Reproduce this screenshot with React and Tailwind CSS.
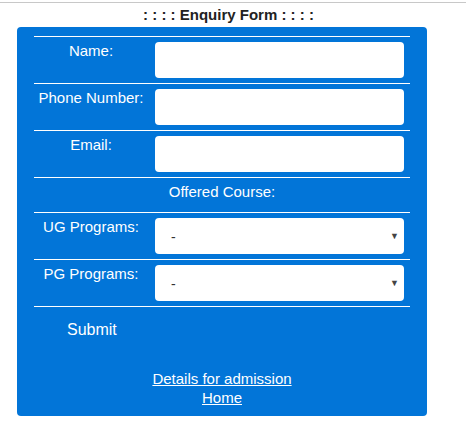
const rows = [
  { label: "Name:", type: "text" },
  { label: "Phone Number:", type: "tel" },
  { label: "Email:", type: "email" },
];

const programs = ["UG Programs:", "PG Programs:"];

function Row({ label, children }) {
  return (
    <div className="flex border-t border-white pt-[5px] pb-[5px]">
      <div className="w-[114px] shrink-0 text-center leading-[18px]">
        {label}
      </div>
      <div className="ml-[7px] w-[249px]">{children}</div>
    </div>
  );
}

export default function App() {
  return (
    <div
      className="h-[422px] w-[466px] bg-white text-[15px]"
      style={{ fontFamily: '"Liberation Sans", Arial, sans-serif' }}
    >
      <div className="h-[2px]" />
      <div className="h-px bg-[#c8c8c8]" />
      <div className="flex h-[24px] items-center justify-center pr-[9px] font-bold text-[#222]">
        : : : : Enquiry Form : : : :
      </div>

      <div className="ml-[17px] h-[389px] w-[410px] rounded-[4px] bg-[#0275d8] px-[17px] pt-[9px] text-white">
        <form onSubmit={(e) => e.preventDefault()}>
          {rows.map((row) => (
            <Row key={row.label} label={row.label}>
              <input
                type={row.type}
                className="block h-[36px] w-full rounded-[4px] bg-white px-3 text-[#333] outline-none"
              />
            </Row>
          ))}

          <div className="h-[35px] border-t border-white pt-[5px] text-center leading-[18px]">
            Offered Course:
          </div>

          {programs.map((label) => (
            <Row key={label} label={label}>
              <div className="relative">
                <select className="block h-[36px] w-full appearance-none rounded-[4px] bg-white pt-[3px] pl-[16px] text-[14px] text-[#333] outline-none">
                  <option>-</option>
                </select>
                <span className="pointer-events-none absolute right-[5px] top-[12px] text-[9px] text-[#444]">
                  ▼
                </span>
              </div>
            </Row>
          ))}

          <div className="flex h-[46px] items-center border-t border-white pl-[33px]">
            <button type="submit" className="text-[16px] leading-[18px] text-white">
              Submit
            </button>
          </div>
        </form>

        <div className="mt-[17px] flex flex-col items-center leading-[19px]">
          <a href="#" className="underline">
            Details for admission
          </a>
          <a href="#" className="underline">
            Home
          </a>
        </div>
      </div>
    </div>
  );
}
